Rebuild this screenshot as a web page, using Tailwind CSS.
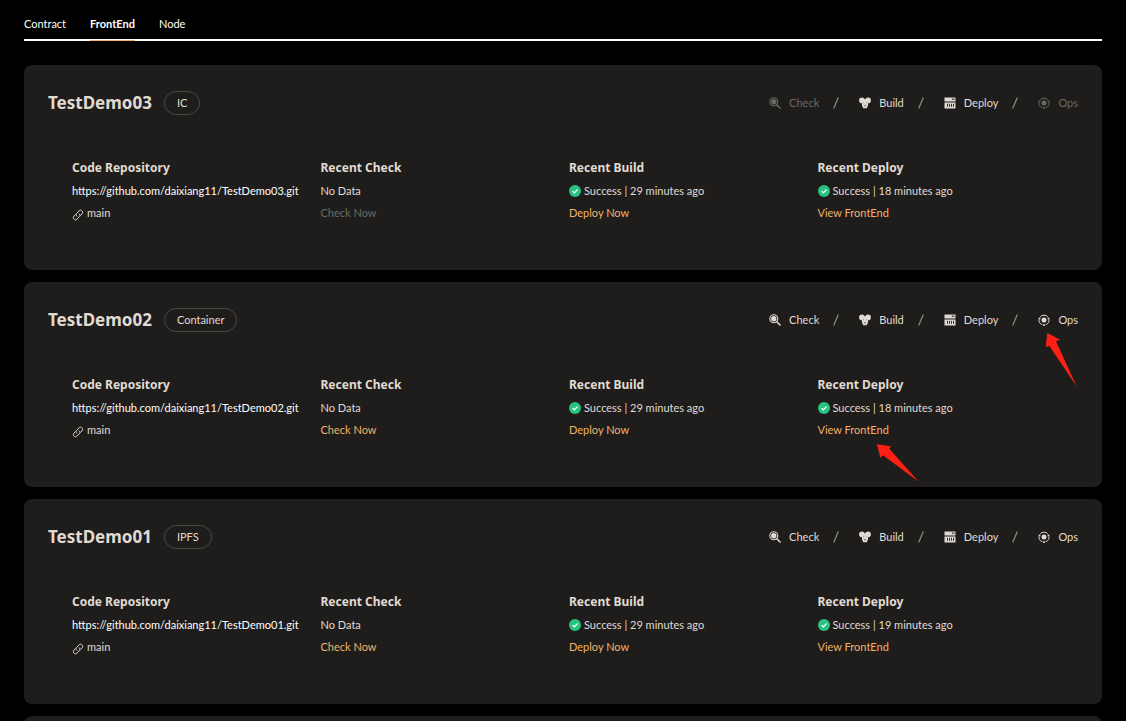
<!DOCTYPE html>
<html lang="en">
<head>
<meta charset="utf-8">
<meta name="viewport" content="width=device-width, initial-scale=1">
<title>FrontEnd</title>
<script src="https://cdn.jsdelivr.net/npm/@tailwindcss/browser@4"></script>
</head>
<body class="h-screen overflow-hidden bg-black px-6 font-['Lato','Open_Sans',sans-serif] text-[11px] leading-4 text-[#e0dbd2]">
<svg class="hidden" aria-hidden="true">
  <symbol id="check" viewBox="0 0 12 12"><circle cx="4.8" cy="4.8" r="4" fill="none" stroke="currentColor" stroke-width="1.100"/><circle cx="4.8" cy="4.8" r="2.700" fill="currentColor"/><path d="M8 8l3 3" stroke="currentColor" stroke-width="1.600" stroke-linecap="round"/></symbol>
  <symbol id="build" viewBox="0 0 12 12"><circle cx="2.900" cy="3.400" r="2.800" fill="currentColor"/><circle cx="9.100" cy="3.400" r="2.800" fill="currentColor"/><path d="M3 2.200h6v6L7.800 11.300H4.200L3 8.200z" fill="currentColor"/><path d="M4.900 8.300L6 9.200l1.100-.9" fill="none" stroke="#1e1d1b" stroke-width=".6"/><path d="M4.500 5.200v1M7.500 5.200v1" stroke="#8a8782" stroke-width=".8"/></symbol>
  <symbol id="deploy" viewBox="0 0 12 12"><path d="M.5.500h11v3.900H.5zM.5 5.400h11v6.100H.5z" fill="currentColor"/><path d="M8.400 1.500v1.500M10 1.500v1.500M3.500 6.800v3M5.500 6.800v3M7.500 6.800v3M9.500 6.800v3" stroke="#1e1d1b" stroke-width=".9"/></symbol>
  <symbol id="ops" viewBox="0 0 12 12"><circle cx="6" cy="6" r="2.500" fill="currentColor"/><path d="M2.200 2.900A5 5 0 0 1 9.800 2.900M11 5.500A5 5 0 0 1 7.700 10.700M4.300 10.700A5 5 0 0 1 1 5.500" fill="none" stroke="currentColor" stroke-width="1"/><circle cx="1.500" cy="4.500" r="1" fill="currentColor"/><circle cx="10.500" cy="4.500" r="1" fill="currentColor"/><circle cx="6" cy="11" r="1" fill="currentColor"/></symbol>
  <symbol id="link" viewBox="0 0 12 12"><g fill="none" stroke="currentColor" stroke-width="1" stroke-linecap="round"><path d="M4.800 7.200C3.700 6 3.900 5 4.700 4.200L7 1.900c2-2 4.900.8 3.100 2.900L8.600 6.300"/><path d="M7.200 4.800C8.300 6 8.100 7 7.300 7.800L5 10.100c-2 2-4.900-.8-3.100-2.900L3.400 5.700"/></g></symbol>
  <symbol id="ok" viewBox="0 0 12 12"><circle cx="6" cy="6" r="6" fill="#29c280"/><path d="M3.500 6.100l1.800 1.700L8.600 4.500" fill="none" stroke="#fff" stroke-width="1.200"/></symbol>
  <symbol id="slash" viewBox="0 0 6 12"><path d="M5.300.500L.7 11.500" stroke="#8a8782" stroke-width="1.300"/></symbol>
</svg>

<nav class="flex h-[41px] gap-6 border-b-2 border-white pt-4 text-white">
  <a href="#contract">Contract</a>
  <a href="#frontend" class="-mb-[2px] border-b border-[#f0b26a] font-bold">FrontEnd</a>
  <a href="#node">Node</a>
</nav>

<main class="mt-6 flex flex-col gap-3">
  <article class="min-h-[205px] shrink-0 rounded-lg bg-[#1e1d1b] px-6 pt-[26px]">
    <header class="flex h-6 items-center justify-between">
      <div class="flex items-center gap-3">
        <h2 class="font-['Noto_Sans',sans-serif] text-[17px] leading-6 font-bold">TestDemo03</h2>
        <span class="flex h-6 items-center rounded-full border border-[#4a4845] px-3">IC</span>
      </div>
      <div class="flex items-center">
        <button disabled class="flex items-center gap-2 text-[#6b6965]"><svg class="size-3"><use href="#check"/></svg>Check</button>
        <svg class="mr-5 ml-[14px] h-3 w-[6px]"><use href="#slash"/></svg>
        <button class="flex items-center gap-2"><svg class="size-3"><use href="#build"/></svg>Build</button>
        <svg class="mr-5 ml-[14px] h-3 w-[6px]"><use href="#slash"/></svg>
        <button class="flex items-center gap-2"><svg class="size-3"><use href="#deploy"/></svg>Deploy</button>
        <svg class="mr-5 ml-[14px] h-3 w-[6px]"><use href="#slash"/></svg>
        <button disabled class="flex items-center gap-2 text-[#6b6965]"><svg class="size-3"><use href="#ops"/></svg>Ops</button>
      </div>
    </header>
    <div class="mt-11 grid grid-cols-4 gap-3 px-6 whitespace-nowrap">
      <section class="flex flex-col items-start gap-[6px]">
        <h3 class="font-['Noto_Sans',sans-serif] text-xs leading-[18px] font-bold">Code Repository</h3>
        <a href="https://github.com/daixiang11/TestDemo03.git" class="text-white">https://github.com/daixiang11/TestDemo03.git</a>
        <p class="flex items-center gap-[3px]"><svg class="mt-1 size-3"><use href="#link"/></svg>main</p>
      </section>
      <section class="flex flex-col items-start gap-[6px]">
        <h3 class="font-['Noto_Sans',sans-serif] text-xs leading-[18px] font-bold">Recent Check</h3>
        <p>No Data</p>
        <button disabled class="text-[#6b6965]">Check Now</button>
      </section>
      <section class="flex flex-col items-start gap-[6px]">
        <h3 class="font-['Noto_Sans',sans-serif] text-xs leading-[18px] font-bold">Recent Build</h3>
        <p class="flex items-center gap-[3px]"><svg class="size-3"><use href="#ok"/></svg>Success | 29 minutes ago</p>
        <button class="text-[#f0b26a]">Deploy Now</button>
      </section>
      <section class="flex flex-col items-start gap-[6px]">
        <h3 class="font-['Noto_Sans',sans-serif] text-xs leading-[18px] font-bold">Recent Deploy</h3>
        <p class="flex items-center gap-[3px]"><svg class="size-3"><use href="#ok"/></svg>Success | 18 minutes ago</p>
        <a href="#view03" class="text-[#f0b26a]">View FrontEnd</a>
      </section>
    </div>
  </article>

  <article class="min-h-[205px] shrink-0 rounded-lg bg-[#1e1d1b] px-6 pt-[26px]">
    <header class="flex h-6 items-center justify-between">
      <div class="flex items-center gap-3">
        <h2 class="font-['Noto_Sans',sans-serif] text-[17px] leading-6 font-bold">TestDemo02</h2>
        <span class="flex h-6 items-center rounded-full border border-[#4a4845] px-3">Container</span>
      </div>
      <div class="flex items-center">
        <button class="flex items-center gap-2"><svg class="size-3"><use href="#check"/></svg>Check</button>
        <svg class="mr-5 ml-[14px] h-3 w-[6px]"><use href="#slash"/></svg>
        <button class="flex items-center gap-2"><svg class="size-3"><use href="#build"/></svg>Build</button>
        <svg class="mr-5 ml-[14px] h-3 w-[6px]"><use href="#slash"/></svg>
        <button class="flex items-center gap-2"><svg class="size-3"><use href="#deploy"/></svg>Deploy</button>
        <svg class="mr-5 ml-[14px] h-3 w-[6px]"><use href="#slash"/></svg>
        <div class="relative">
          <button class="flex items-center gap-2"><svg class="size-3"><use href="#ops"/></svg>Ops</button>
          <svg class="absolute top-5 right-0 h-[55px] w-[33px]" viewBox="0 0 33 55" aria-hidden="true"><path d="M2.300 1L15 7.700 11 9.300 31.700 54.500 4.300 13.700.7 15z" fill="#ff2015"/></svg>
        </div>
      </div>
    </header>
    <div class="mt-11 grid grid-cols-4 gap-3 px-6 whitespace-nowrap">
      <section class="flex flex-col items-start gap-[6px]">
        <h3 class="font-['Noto_Sans',sans-serif] text-xs leading-[18px] font-bold">Code Repository</h3>
        <a href="https://github.com/daixiang11/TestDemo02.git" class="text-white">https://github.com/daixiang11/TestDemo02.git</a>
        <p class="flex items-center gap-[3px]"><svg class="mt-1 size-3"><use href="#link"/></svg>main</p>
      </section>
      <section class="flex flex-col items-start gap-[6px]">
        <h3 class="font-['Noto_Sans',sans-serif] text-xs leading-[18px] font-bold">Recent Check</h3>
        <p>No Data</p>
        <button class="text-[#f0b26a]">Check Now</button>
      </section>
      <section class="flex flex-col items-start gap-[6px]">
        <h3 class="font-['Noto_Sans',sans-serif] text-xs leading-[18px] font-bold">Recent Build</h3>
        <p class="flex items-center gap-[3px]"><svg class="size-3"><use href="#ok"/></svg>Success | 29 minutes ago</p>
        <button class="text-[#f0b26a]">Deploy Now</button>
      </section>
      <section class="relative flex flex-col items-start gap-[6px]">
        <h3 class="font-['Noto_Sans',sans-serif] text-xs leading-[18px] font-bold">Recent Deploy</h3>
        <p class="flex items-center gap-[3px]"><svg class="size-3"><use href="#ok"/></svg>Success | 18 minutes ago</p>
        <a href="#view02" class="text-[#f0b26a]">View FrontEnd</a>
        <svg class="absolute top-[67px] left-[58px] h-[40px] w-[44px]" viewBox="0 0 44 40" aria-hidden="true"><path d="M1 1.300L15 3.300 13.300 5.700 42.700 38.700 7 12.300 4.300 14.700z" fill="#ff2015"/></svg>
      </section>
    </div>
  </article>

  <article class="min-h-[205px] shrink-0 rounded-lg bg-[#1e1d1b] px-6 pt-[26px]">
    <header class="flex h-6 items-center justify-between">
      <div class="flex items-center gap-3">
        <h2 class="font-['Noto_Sans',sans-serif] text-[17px] leading-6 font-bold">TestDemo01</h2>
        <span class="flex h-6 items-center rounded-full border border-[#4a4845] px-3">IPFS</span>
      </div>
      <div class="flex items-center">
        <button class="flex items-center gap-2"><svg class="size-3"><use href="#check"/></svg>Check</button>
        <svg class="mr-5 ml-[14px] h-3 w-[6px]"><use href="#slash"/></svg>
        <button class="flex items-center gap-2"><svg class="size-3"><use href="#build"/></svg>Build</button>
        <svg class="mr-5 ml-[14px] h-3 w-[6px]"><use href="#slash"/></svg>
        <button class="flex items-center gap-2"><svg class="size-3"><use href="#deploy"/></svg>Deploy</button>
        <svg class="mr-5 ml-[14px] h-3 w-[6px]"><use href="#slash"/></svg>
        <button class="flex items-center gap-2"><svg class="size-3"><use href="#ops"/></svg>Ops</button>
      </div>
    </header>
    <div class="mt-11 grid grid-cols-4 gap-3 px-6 whitespace-nowrap">
      <section class="flex flex-col items-start gap-[6px]">
        <h3 class="font-['Noto_Sans',sans-serif] text-xs leading-[18px] font-bold">Code Repository</h3>
        <a href="https://github.com/daixiang11/TestDemo01.git" class="text-white">https://github.com/daixiang11/TestDemo01.git</a>
        <p class="flex items-center gap-[3px]"><svg class="mt-1 size-3"><use href="#link"/></svg>main</p>
      </section>
      <section class="flex flex-col items-start gap-[6px]">
        <h3 class="font-['Noto_Sans',sans-serif] text-xs leading-[18px] font-bold">Recent Check</h3>
        <p>No Data</p>
        <button class="text-[#f0b26a]">Check Now</button>
      </section>
      <section class="flex flex-col items-start gap-[6px]">
        <h3 class="font-['Noto_Sans',sans-serif] text-xs leading-[18px] font-bold">Recent Build</h3>
        <p class="flex items-center gap-[3px]"><svg class="size-3"><use href="#ok"/></svg>Success | 29 minutes ago</p>
        <button class="text-[#f0b26a]">Deploy Now</button>
      </section>
      <section class="flex flex-col items-start gap-[6px]">
        <h3 class="font-['Noto_Sans',sans-serif] text-xs leading-[18px] font-bold">Recent Deploy</h3>
        <p class="flex items-center gap-[3px]"><svg class="size-3"><use href="#ok"/></svg>Success | 19 minutes ago</p>
        <a href="#view01" class="text-[#f0b26a]">View FrontEnd</a>
      </section>
    </div>
  </article>

  <article class="min-h-[205px] shrink-0 rounded-lg bg-[#1e1d1b]"></article>
</main>
</body>
</html>
